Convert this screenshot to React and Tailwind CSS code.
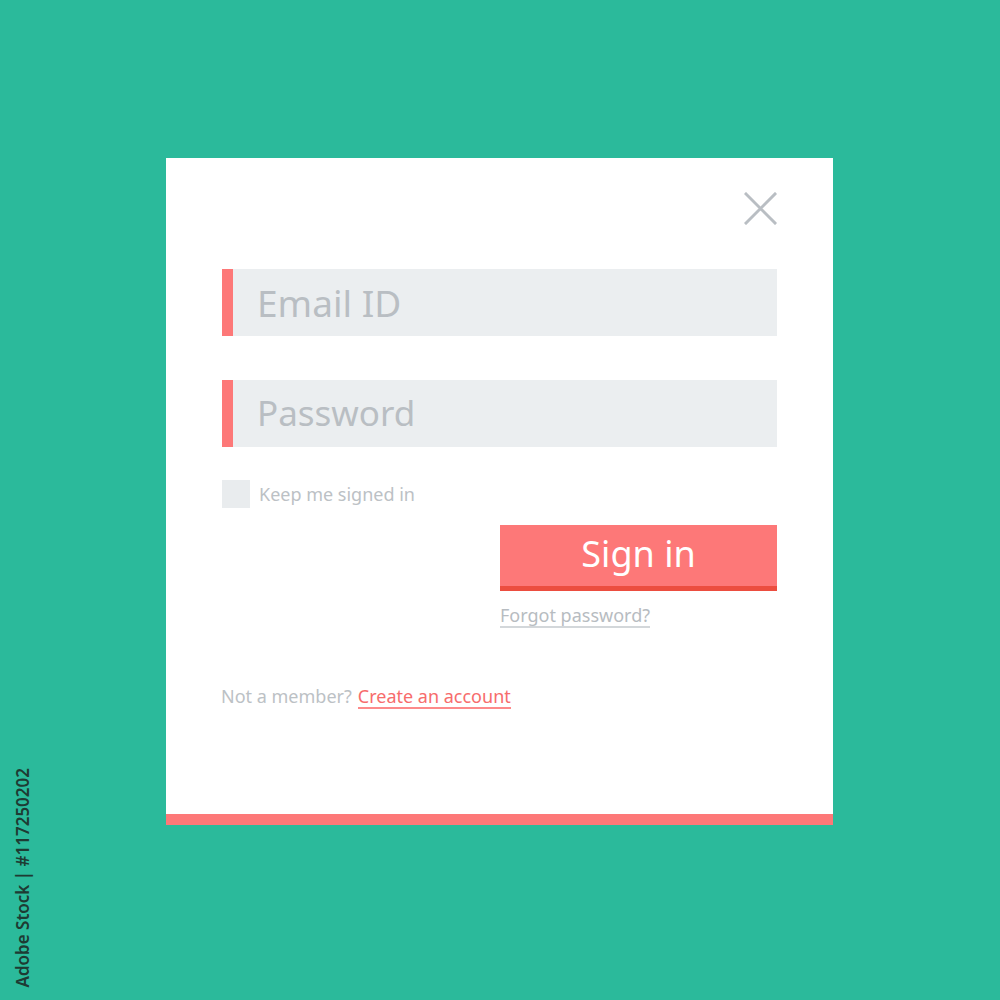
export default function App() {
  const font = { fontFamily: '"Noto Sans", "Open Sans", sans-serif' };
  return (
    <div className="relative w-[1000px] h-[1000px] bg-[#2bba9b] overflow-hidden" style={font}>
      <div className="pt-[158px] pl-[166px]">
        <div className="w-[667px] h-[667px] bg-white flex flex-col">
          <div className="flex-1 flex flex-col px-[56px]">
            <div className="flex justify-end pt-[34px]">
              <button className="w-[33px] h-[33px] flex items-center justify-center">
                <svg width="33" height="33" viewBox="0 0 33 33">
                  <path d="M2 2 L31 31 M31 2 L2 31" stroke="#b9bec3" strokeWidth="3" strokeLinecap="square" />
                </svg>
              </button>
            </div>

            <div className="mt-[44px] flex h-[67px] bg-[#ebeef0]">
              <div className="w-[11px] shrink-0 bg-[#fd7878]" />
              <input
                placeholder="Email ID"
                className="flex-1 min-w-0 bg-transparent pl-[24px] text-[37px] text-[#b9bec3] placeholder:text-[#b9bec3] outline-none"
              />
            </div>

            <div className="mt-[44px] flex h-[67px] bg-[#ebeef0]">
              <div className="w-[11px] shrink-0 bg-[#fd7878]" />
              <input
                placeholder="Password"
                className="flex-1 min-w-0 bg-transparent pl-[24px] text-[35px] text-[#b9bec3] placeholder:text-[#b9bec3] outline-none"
              />
            </div>

            <label className="mt-[33px] flex items-center gap-[9px]">
              <span className="w-[28px] h-[28px] bg-[#e9ecee]" />
              <span className="text-[18px] text-[#bcc1c5]">Keep me signed in</span>
            </label>

            <div className="flex flex-col items-start pl-[278px] mt-[17px]">
              <button className="w-[277px] h-[66px] bg-[#fd7878] border-b-[5px] border-[#ec4d3f] text-white text-[36px] leading-none flex items-center justify-center pb-[3px]">
                Sign in
              </button>
              <a className="mt-[13px] text-[18px] text-[#b7bcc1] leading-[22px] border-b-[2px] border-[#d3d7da]">
                Forgot password?
              </a>
            </div>

            <div className="mt-[55px] flex items-baseline gap-[6px] text-[18px] -ml-[1px]">
              <span className="text-[#bcc1c5]">Not a member?</span>
              <a className="text-[#f76c6c] border-b-[2px] border-[#fd8a8a] leading-[22px]">Create an account</a>
            </div>
          </div>
          <div className="h-[11px] bg-[#fd7878]" />
        </div>
      </div>

      <div className="absolute left-[12px] top-[770px] w-[22px] h-[216px] flex items-center justify-center">
        <span className="-rotate-90 whitespace-nowrap text-[17px] font-semibold text-[#1e3b33]">
          Adobe Stock | #117250202
        </span>
      </div>
    </div>
  );
}
